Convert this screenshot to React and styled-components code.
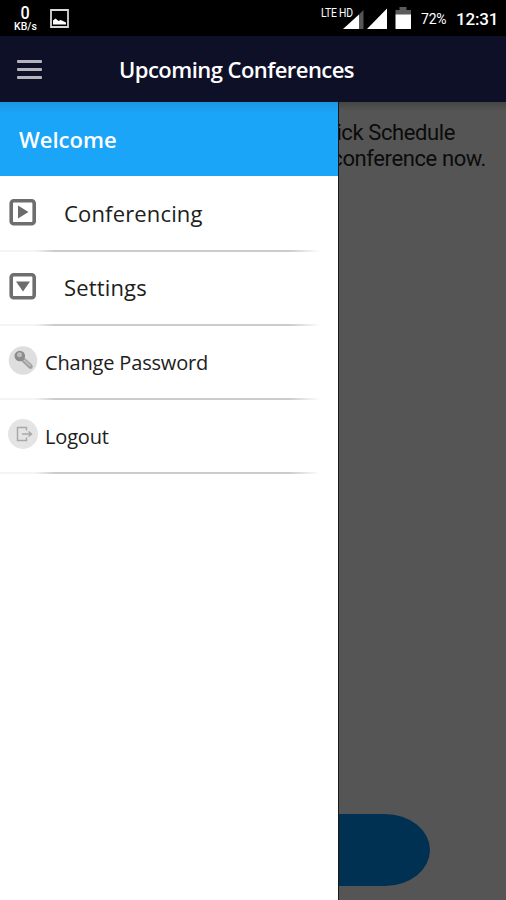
import React from "react";
import styled, { createGlobalStyle } from "styled-components";

const items = [
  { label: "Conferencing", icon: "play" },
  { label: "Settings", icon: "down" },
  { label: "Change Password", icon: "key", sub: true },
  { label: "Logout", icon: "logout", sub: true },
];

const PictureIcon = () => (
  <svg width="19" height="19" viewBox="0 0 19 19">
    <path d="M1 1h17v17H1z" fill="none" stroke="#d8d8d8" strokeWidth="1.8" />
    <path d="M3 15.500v-4l2.500-2 3 2.500 2-1 2.500 1 3 1.500v2z" fill="#fff" />
  </svg>
);

const SignalIcons = () => (
  <svg width="93" height="26" viewBox="0 0 93 26">
    <path d="M35.500 3v19H31V7.500z" fill="#555" />
    <path d="M31 7.500v14.500H15z" fill="#fff" />
    <path d="M59 1.500V22H39z" fill="#fff" />
    <path d="M71.500 0h7v3h4.500v5H67.500V3h4z" fill="#5b5b5b" />
    <path d="M67.500 7.500h15.500V22H67.500z" fill="#fff" />
  </svg>
);

const MenuIcon = ({ name }) => {
  if (name === "play" || name === "down") {
    return (
      <svg width="28" height="28" viewBox="0 0 28 28">
        <rect x="3.200" y="2.700" width="23" height="23" rx="2.500" fill="#fff" stroke="#6e6e6e" strokeWidth="3.600" />
        <path d={name === "play" ? "M10 7.500v13l10.500-6.500z" : "M8 9.500h14L15 19.500z"} fill="#6c6c6c" />
      </svg>
    );
  }
  if (name === "key") {
    return (
      <svg width="30" height="30" viewBox="0 0 30 30">
        <circle cx="15" cy="15.500" r="14.300" fill="#dedede" />
        <path d="M15 14.500l7.500 7" stroke="#a0a0a0" strokeWidth="4.500" strokeLinecap="round" />
        <path d="M16 15l6.500 6" stroke="#c9c9c9" strokeWidth="1.200" />
        <circle cx="11.800" cy="11" r="5.300" fill="#8b8b8b" />
        <circle cx="11.500" cy="9.700" r="2.500" fill="#bcbcbc" />
      </svg>
    );
  }
  return (
    <svg width="30" height="30" viewBox="0 0 30 30">
      <circle cx="15" cy="15" r="15" fill="#e4e4e4" />
      <path d="M18.500 11.500v-3h-9v13h9v-3M14 15h9M20.500 12.500l3 2.500-3 2.500" fill="none" stroke="#a8a8a8" strokeWidth="1.500" />
    </svg>
  );
};

const App = () => {
  return (
    <Screen>
      <GlobalStyle />
      <StatusBar>
        <Speed>
          <b>0</b>
          <span>KB/s</span>
        </Speed>
        <PictureIcon />
        <Network>
          <NetworkLabel>LTE HD</NetworkLabel>
          <SignalIcons />
        </Network>
        <Battery>72%</Battery>
        <Clock>12:31</Clock>
      </StatusBar>
      <AppBar>
        <Burger>
          <i />
          <i />
          <i />
        </Burger>
        <Title>Upcoming Conferences</Title>
      </AppBar>
      <Page>
        <Message>
          <Line $width={455}>Click Schedule</Line>
          <Line $width={486}>conference now.</Line>
        </Message>
        <ScheduleButton aria-label="Schedule" />
        <Drawer>
          <Welcome>Welcome</Welcome>
          {items.map((item) => (
            <MenuItem key={item.label} $sub={item.sub}>
              <MenuIcon name={item.icon} />
              <Label $sub={item.sub}>{item.label}</Label>
            </MenuItem>
          ))}
        </Drawer>
      </Page>
    </Screen>
  );
};

export default App;

const GlobalStyle = createGlobalStyle`
  body {
    margin: 0;
  }
  * {
    box-sizing: border-box;
  }
`;

const Screen = styled.div`
  display: flex;
  flex-direction: column;
  width: 506px;
  height: 900px;
  overflow: hidden;
  background-color: #000000;
  font-family: "Open Sans", sans-serif;
`;

const StatusBar = styled.div`
  display: flex;
  align-items: center;
  flex: none;
  height: 36px;
  padding: 0 8px 0 13px;
  color: #ffffff;
  font-family: Roboto, sans-serif;
`;

const Speed = styled.div`
  display: flex;
  flex-direction: column;
  align-items: center;
  width: 25px;
  margin: 0 12px 0 0;
  b {
    font-size: 18px;
    font-weight: 500;
    line-height: 18px;
    transform: scaleX(0.9);
  }
  span {
    font-size: 10.5px;
    font-weight: 500;
    line-height: 10px;
  }
`;

const Network = styled.div`
  position: relative;
  width: 93px;
  height: 26px;
  margin: 3px 0 0 auto;
`;

const NetworkLabel = styled.span`
  position: absolute;
  left: -7px;
  top: -1px;
  font-size: 12px;
  line-height: 14px;
  letter-spacing: -0.2px;
  white-space: nowrap;
  transform: scaleX(0.86);
  transform-origin: left;
`;

const Battery = styled.span`
  width: 35px;
  font-size: 14px;
  letter-spacing: -0.2px;
  margin-top: 1px;
`;

const Clock = styled.span`
  width: 42px;
  font-size: 17px;
  font-weight: 500;
  letter-spacing: -0.2px;
  margin-top: 2px;
`;

const AppBar = styled.div`
  display: flex;
  align-items: center;
  flex: none;
  height: 66px;
  padding-left: 17px;
  background-color: #0e1027;
`;

const Burger = styled.div`
  display: flex;
  flex-direction: column;
  gap: 5px;
  width: 25px;
  margin: 1px 77px 0 0;
  i {
    height: 3px;
    border-radius: 1px;
    background-color: #b4b4ba;
  }
`;

const Title = styled.h1`
  margin: 0;
  color: #ffffff;
  font-size: 22px;
  font-weight: 600;
  line-height: 30px;
  letter-spacing: -0.54px;
  white-space: nowrap;
`;

const Page = styled.div`
  position: relative;
  display: flex;
  flex-direction: column;
  justify-content: space-between;
  flex: 1;
  padding: 18px 0 14px;
  background: linear-gradient(#454545, #555555 9px);
`;

const Message = styled.div`
  color: #0b0b0b;
  font-family: Roboto, sans-serif;
  font-size: 22px;
  line-height: 26px;
  letter-spacing: -0.4px;
  text-align: right;
`;

const Line = styled.div`
  width: ${(props) => props.$width}px;
`;

const ScheduleButton = styled.button`
  width: 354px;
  height: 72px;
  margin-left: 76px;
  border: none;
  border-radius: 45px / 36px;
  background-color: #003153;
`;

const Drawer = styled.div`
  position: absolute;
  top: 0;
  bottom: 0;
  left: 0;
  width: 338px;
  background-color: #ffffff;
  box-shadow: 1px 0 0 #17191b;
`;

const Welcome = styled.div`
  height: 74px;
  padding: 22px 0 0 19px;
  background: linear-gradient(#1c98e2, #1ba5f8 12px);
  color: #ffffff;
  font-size: 22px;
  font-weight: 600;
  line-height: 30px;
`;

const divider = "linear-gradient(to right, #f4f4f4 35px, #cccccc 55px, #cccccc 290px, #ffffff 320px)";

const MenuItem = styled.div`
  display: flex;
  align-items: center;
  height: 74px;
  padding-left: 8px;
  gap: ${(props) => (props.$sub ? 7 : 28)}px;
  background: ${divider} 0 0 / 100% 2px no-repeat;
  &:nth-child(2) {
    background: none;
  }
  &:last-child {
    height: 76px;
    padding-bottom: 2px;
    background-image: ${divider}, ${divider};
    background-position: 0 0, 0 100%;
  }
  svg {
    flex: none;
    margin-bottom: 2px;
  }
`;

const Label = styled.span`
  color: #202020;
  font-size: ${(props) => (props.$sub ? 20 : 22)}px;
  line-height: 30px;
  letter-spacing: ${(props) => (props.$sub ? -0.17 : 0.16)}px;
  padding-top: ${(props) => (props.$sub ? 4 : 0)}px;
  white-space: nowrap;
`;
